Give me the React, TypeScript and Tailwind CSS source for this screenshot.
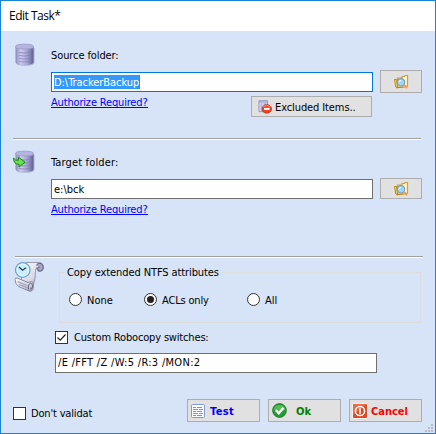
import React from 'react';

function DatabaseIcon({ arrow = false }: { arrow?: boolean }) {
  return (
    <svg width="24" height="24" viewBox="0 0 24 24" className="block">
      <defs>
        <linearGradient id="cyl" x1="0" x2="1" y1="0" y2="0">
          <stop offset="0" stopColor="#8a8abc" />
          <stop offset="0.3" stopColor="#cdcdf2" />
          <stop offset="0.65" stopColor="#a3a3d2" />
          <stop offset="1" stopColor="#5f5f90" />
        </linearGradient>
      </defs>
      <path d="M3 5v14.500c0 2 3 3.300 9 3.300s9.500-1.300 9.500-3.300V5z" fill="#6b6b86" opacity="0.4" />
      <path d="M2.500 3.500v15.500c0 2 3.500 2.800 9 2.800s9-.8 9-2.800V3.500z" fill="url(#cyl)" />
      <path d="M2.500 4Q2.500 2 5.500 1.500q6-.8 12 0 3 .5 3 2.500-.5 1.500-3.500 1.700-5.500.6-11 0Q2.800 5.500 2.500 4z" fill="#b4b4e2" stroke="#9696c2" strokeWidth="0.700" />
      <path d="M6 9.500q5.500 1 10.500 0M6 12.500q5.500 1 10.500 0M6 15.500q5.500 1 10.500 0M6 18.500q5.500 1 10.500 0" fill="none" stroke="#7d7db2" strokeWidth="0.700" />
      {arrow && (
        <path d="M0.500 8Q2 10.800 5.500 10.300V7.200L12 12.200 6 17v-2.700Q0.500 14.500 0.500 8z" fill="#6be04a" stroke="#198818" strokeWidth="1" />
      )}
    </svg>
  );
}

function BrowseIcon() {
  return (
    <svg width="16" height="16" viewBox="0 0 16 16" className="block">
      <path d="M4.500 4h4.500V2.500h2.500l.5-1h2.500v10.500L11 13H4.500z" fill="#fff7cc" stroke="#cda03c" strokeWidth="1.200" />
      <path d="M1.500 5.500h2.200v2l1 6.300L2.800 13z" fill="#ffe78a" stroke="#b8860b" strokeWidth="1" />
      <path d="M3.500 13.800l7-.8" fill="none" stroke="#b8860b" strokeWidth="1" />
      <circle cx="8" cy="8.300" r="3.700" fill="#9bd6f8" stroke="#8099ae" strokeWidth="1.100" />
      <path d="M6 8.300q.3-2 2.200-2" stroke="#fff" fill="none" />
      <path d="M11.200 11.200l2.300 2.300" stroke="#ee9660" strokeWidth="1.800" strokeLinecap="round" />
    </svg>
  );
}

function ExcludeIcon() {
  return (
    <svg width="14" height="14" viewBox="0 0 14 14" className="block">
      <path d="M1 .7h8.500v11H1z" fill="#dfe3f8" stroke="#8790bd" strokeWidth="0.900" />
      <path d="M1 2h8M2.500 4h2M5.500 4h3M2.500 6h2M2.500 8h2M2.500 10h2" stroke="#8994c8" />
      <ellipse cx="8.800" cy="8.900" rx="4.800" ry="4.300" fill="#ea4328" stroke="#bb2c18" strokeWidth="0.700" />
      <path d="M5.200 6.700q3.600-3 7.200 0" stroke="#ff9278" fill="none" />
      <rect x="6" y="7.900" width="5.600" height="2" fill="#fff" />
    </svg>
  );
}

function ScheduleIcon() {
  return (
    <svg width="32" height="32" viewBox="0 0 32 32" className="block">
      <defs>
        <linearGradient id="paper" x1="0" x2="1" y1="0" y2="1">
          <stop offset="0" stopColor="#ffffff" />
          <stop offset="0.600" stopColor="#d9d9e8" />
          <stop offset="1" stopColor="#8888a4" />
        </linearGradient>
      </defs>
      <path d="M13 1.500h13.500c4.500 0 5.500 8 1 8.500-2.500.3-4-1.500-4-3.500-1.500 3.500-1 7-1.500 11l-1.500 6L8 19z" fill="url(#paper)" stroke="#85859d" strokeWidth="0.800" />
      <path d="M23.500 4.500Q24.200 2.200 26.500 2.200c4.300.3 4.700 7 1.200 7.800-2.600.5-3.700-1.700-2.700-3.500q1-1 2 .1" fill="#a8a8cc" stroke="#696987" strokeWidth="1.100" />
      <path d="M2 18.500q0-1.800 2-1.500l11 4.500 3.500-1q2.500 1 1.700 6.500-.7 4-4.200 3L6 25.700Q2 23.500 2 18.500z" fill="url(#paper)" stroke="#7e7e9c" strokeWidth="0.900" />
      <path d="M4.500 20.500l10 4.200M6 23.500l9 3.500" stroke="#aaaac2" strokeWidth="1.400" />
      <path d="M15.500 28.500q-.7-5.500 2.300-6.500 3 1.500 1.300 5-1.700 2-1.500-.5" fill="#ccccdf" stroke="#66667f" strokeWidth="1" />
      <circle cx="9.800" cy="9" r="7.300" fill="#c9ecff" stroke="#6aa3c8" strokeWidth="1.300" />
      <circle cx="9.800" cy="9" r="5.900" fill="none" stroke="#edfaff" strokeWidth="0.900" />
      <path d="M6 6L9.500 9.200l3.500-2.500" fill="none" stroke="#283747" strokeWidth="1.300" />
    </svg>
  );
}

function TestIcon() {
  return (
    <svg width="14" height="14" viewBox="0 0 14 14" className="block">
      <rect x="0.500" y="0.500" width="13" height="13" rx="1" fill="#f8fbff" stroke="#809ccd" />
      <path d="M2 3.500h3M6 3.500h5M2 5.500h5M8 5.500h4M2 7.500h3M6 7.500h5M2 9.500h5M8 9.500h4M2 11.500h3M6 11.500h5" stroke="#8a939e" />
    </svg>
  );
}

function OkIcon() {
  return (
    <svg width="15" height="15" viewBox="0 0 15 15" className="block">
      <circle cx="7.500" cy="7.500" r="6.900" fill="#229b35" stroke="#147629" strokeWidth="0.800" />
      <path d="M1.600 7a6 6 0 0 1 11.800 0Q7 9 1.600 7z" fill="#55bb52" />
      <path d="M3.800 7.200l3 3 4.700-5.500" fill="none" stroke="#fff" strokeWidth="2.300" />
    </svg>
  );
}

function CancelIcon() {
  return (
    <svg width="16" height="16" viewBox="0 0 16 16" className="block">
      <rect x="0.500" y="0.500" width="15" height="15" rx="1.500" fill="#fff" />
      <rect x="1" y="1" width="14" height="14" rx="1" fill="#dc4a27" />
      <path d="M1 1h14L1 12z" fill="#ee8261" opacity="0.6" />
      <circle cx="8" cy="8" r="4.600" fill="none" stroke="#fff" strokeWidth="1.500" />
      <path d="M8 5.200v5.600" stroke="#fff" strokeWidth="1.600" />
    </svg>
  );
}

const button = 'flex items-center border border-[#adadad] bg-[#e1e1e1] shrink-0';

function Browse({ className }: { className: string }) {
  return (
    <button className={`${button} w-[42px] justify-center ${className}`} aria-label="Browse">
      <BrowseIcon />
    </button>
  );
}

function Rule({ className }: { className: string }) {
  return <div className={`h-[2px] shrink-0 border-t border-[#a0a0a0] bg-white ${className}`} />;
}

function AuthorizeLink({ className }: { className: string }) {
  return (
    <a className={`h-[13px] self-start border-b border-[#0000ff] pt-[2px] leading-[12px] tracking-[-0.17px] text-[#0000ff] ${className}`}>
      Authorize Required?
    </a>
  );
}

function Radio({ label, checked, className }: { label: string; checked?: boolean; className: string }) {
  return (
    <label className={`flex h-[13px] items-center gap-[5px] ${className}`}>
      <span className="flex size-[13px] shrink-0 items-center justify-center rounded-full border border-[#333] bg-white">
        {checked && <span className="size-[7px] rounded-full bg-[#222]" />}
      </span>
      <span className="pt-[2px]">{label}</span>
    </label>
  );
}

function Check({ checked }: { checked?: boolean }) {
  return (
    <span className="size-[13px] shrink-0 border border-[#333] bg-white">
      {checked && (
        <svg width="11" height="11" viewBox="0 0 11 11" className="block">
          <path d="M1.500 5.500l2.700 2.700 5.300-5.700" fill="none" stroke="#222" strokeWidth="1.200" />
        </svg>
      )}
    </span>
  );
}

export default function App() {
  return (
    <div className="flex h-[434px] w-[436px] flex-col overflow-hidden border border-[#1883d7] bg-[#d7e4f7] font-['DejaVu_Sans_Condensed','DejaVu_Sans',sans-serif] text-[11px] leading-[14px] whitespace-pre text-black [font-stretch:condensed]">
      <header className="flex h-[30px] shrink-0 items-center bg-white pl-2 font-['Open_Sans',sans-serif] text-[12px] tracking-[-0.5px] [font-stretch:normal]">
        Edit Task*
      </header>

      <section className="flex h-[107px] shrink-0 pl-3">
        <div className="w-[38px] pt-[12px]"><DatabaseIcon /></div>
        <div className="flex flex-col pt-[18px]">
          <div className="h-[21px] tracking-[-0.1px]">Source folder:</div>
          <div className="flex h-[23px] gap-[7px]">
            <div className="mt-[2px] flex h-[20px] w-[322px] items-center border border-[#0078d7] bg-white pl-[2px]">
              <span className="h-[14px] border-r border-[#cc6600] bg-[#3399ff] leading-[15px] tracking-[-0.05px] text-white">D:\TrackerBackup</span>
            </div>
            <Browse className="h-[23px]" />
          </div>
          <div className="flex w-[321px] justify-between">
            <AuthorizeLink className="mt-[2px]" />
            <button className={`${button} mt-[3px] h-[21px] w-[121px] gap-[3px] pl-[6px] tracking-[-0.1px]`}>
              <ExcludeIcon /><span className="pt-[2px]">Excluded Items..</span>
            </button>
          </div>
        </div>
      </section>
      <Rule className="ml-3 w-[408px]" />

      <section className="flex h-[116px] shrink-0 pl-3">
        <div className="w-[38px] pt-[10px]"><DatabaseIcon arrow /></div>
        <div className="flex flex-col pt-[16px]">
          <div className="h-[22px] tracking-[0.15px]">Target folder:</div>
          <div className="flex h-[21px] gap-[7px]">
            <div className="mt-[1px] flex h-[20px] w-[322px] items-center border border-[#707070] bg-white pt-px pl-[2px]">e:\bck</div>
            <Browse className="h-[21px]" />
          </div>
          <AuthorizeLink className="mt-[3px]" />
        </div>
      </section>
      <Rule className="ml-[14px] w-[408px]" />

      <section className="flex h-[141px] shrink-0 pl-3">
        <div className="w-[42px] pt-[3px]"><ScheduleIcon /></div>
        <div className="flex flex-col pt-[8px]">
          <div role="group" className="ml-1 flex h-[57px] w-[362px] flex-col">
            <div className="flex h-[14px] items-center">
              <div className="h-[8px] w-[6px] self-end border-t border-l border-[#dcdcdc]" />
              <span className="w-[156px] pl-[2px] tracking-[-0.1px]">Copy extended NTFS attributes</span>
              <div className="h-[8px] flex-1 self-end border-t border-r border-[#dcdcdc]" />
            </div>
            <div className="flex flex-1 border-x border-b border-[#dcdcdc] pt-[13px] pl-[9px]">
              <Radio label="None" className="w-[75px]" />
              <Radio label="ACLs only" checked className="w-[103px] tracking-[-0.17px]" />
              <Radio label="All" className="" />
            </div>
          </div>
          <label className="mt-[8px] flex h-[13px] items-center gap-[6px]">
            <Check checked /><span className="pt-px tracking-[-0.17px]">Custom Robocopy switches:</span>
          </label>
          <div className="mt-[9px] flex h-[20px] w-[322px] items-center border border-[#707070] bg-white pl-[2px] tracking-[0.3px]">/E /FFT /Z /W:5 /R:3 /MON:2</div>
        </div>
      </section>

      <footer className="relative flex flex-1 items-start pl-3 font-bold">
        <label className="mt-[8px] flex h-[13px] w-[174px] items-center gap-[5px] font-normal">
          <Check /><span className="pt-px tracking-[-0.17px]">Don't validat</span>
        </label>
        <div className="flex gap-2">
          <button className={`${button} h-[23px] w-[73px] gap-[5px] pl-[3px] text-[#0000ff]`}><TestIcon /><span className="pt-[2px] tracking-[0.4px]">Test</span></button>
          <button className={`${button} h-[23px] w-[73px] gap-[9px] pl-[3px] text-[#008000]`}><OkIcon /><span className="pt-[2px]">Ok</span></button>
          <button className={`${button} h-[23px] w-[73px] gap-[3px] pl-[2px] text-[#ff0000]`}><CancelIcon /><span className="pt-[2px]">Cancel</span></button>
        </div>
        <svg width="8" height="8" viewBox="0 0 8 8" className="absolute right-[2px] bottom-[1px]">
          <path d="M6 0h2v2H6zM3 3h2v2H3zM6 3h2v2H6zM0 6h2v2H0zM3 6h2v2H3zM6 6h2v2H6z" fill="#b5bcc8" />
        </svg>
      </footer>
    </div>
  );
}
